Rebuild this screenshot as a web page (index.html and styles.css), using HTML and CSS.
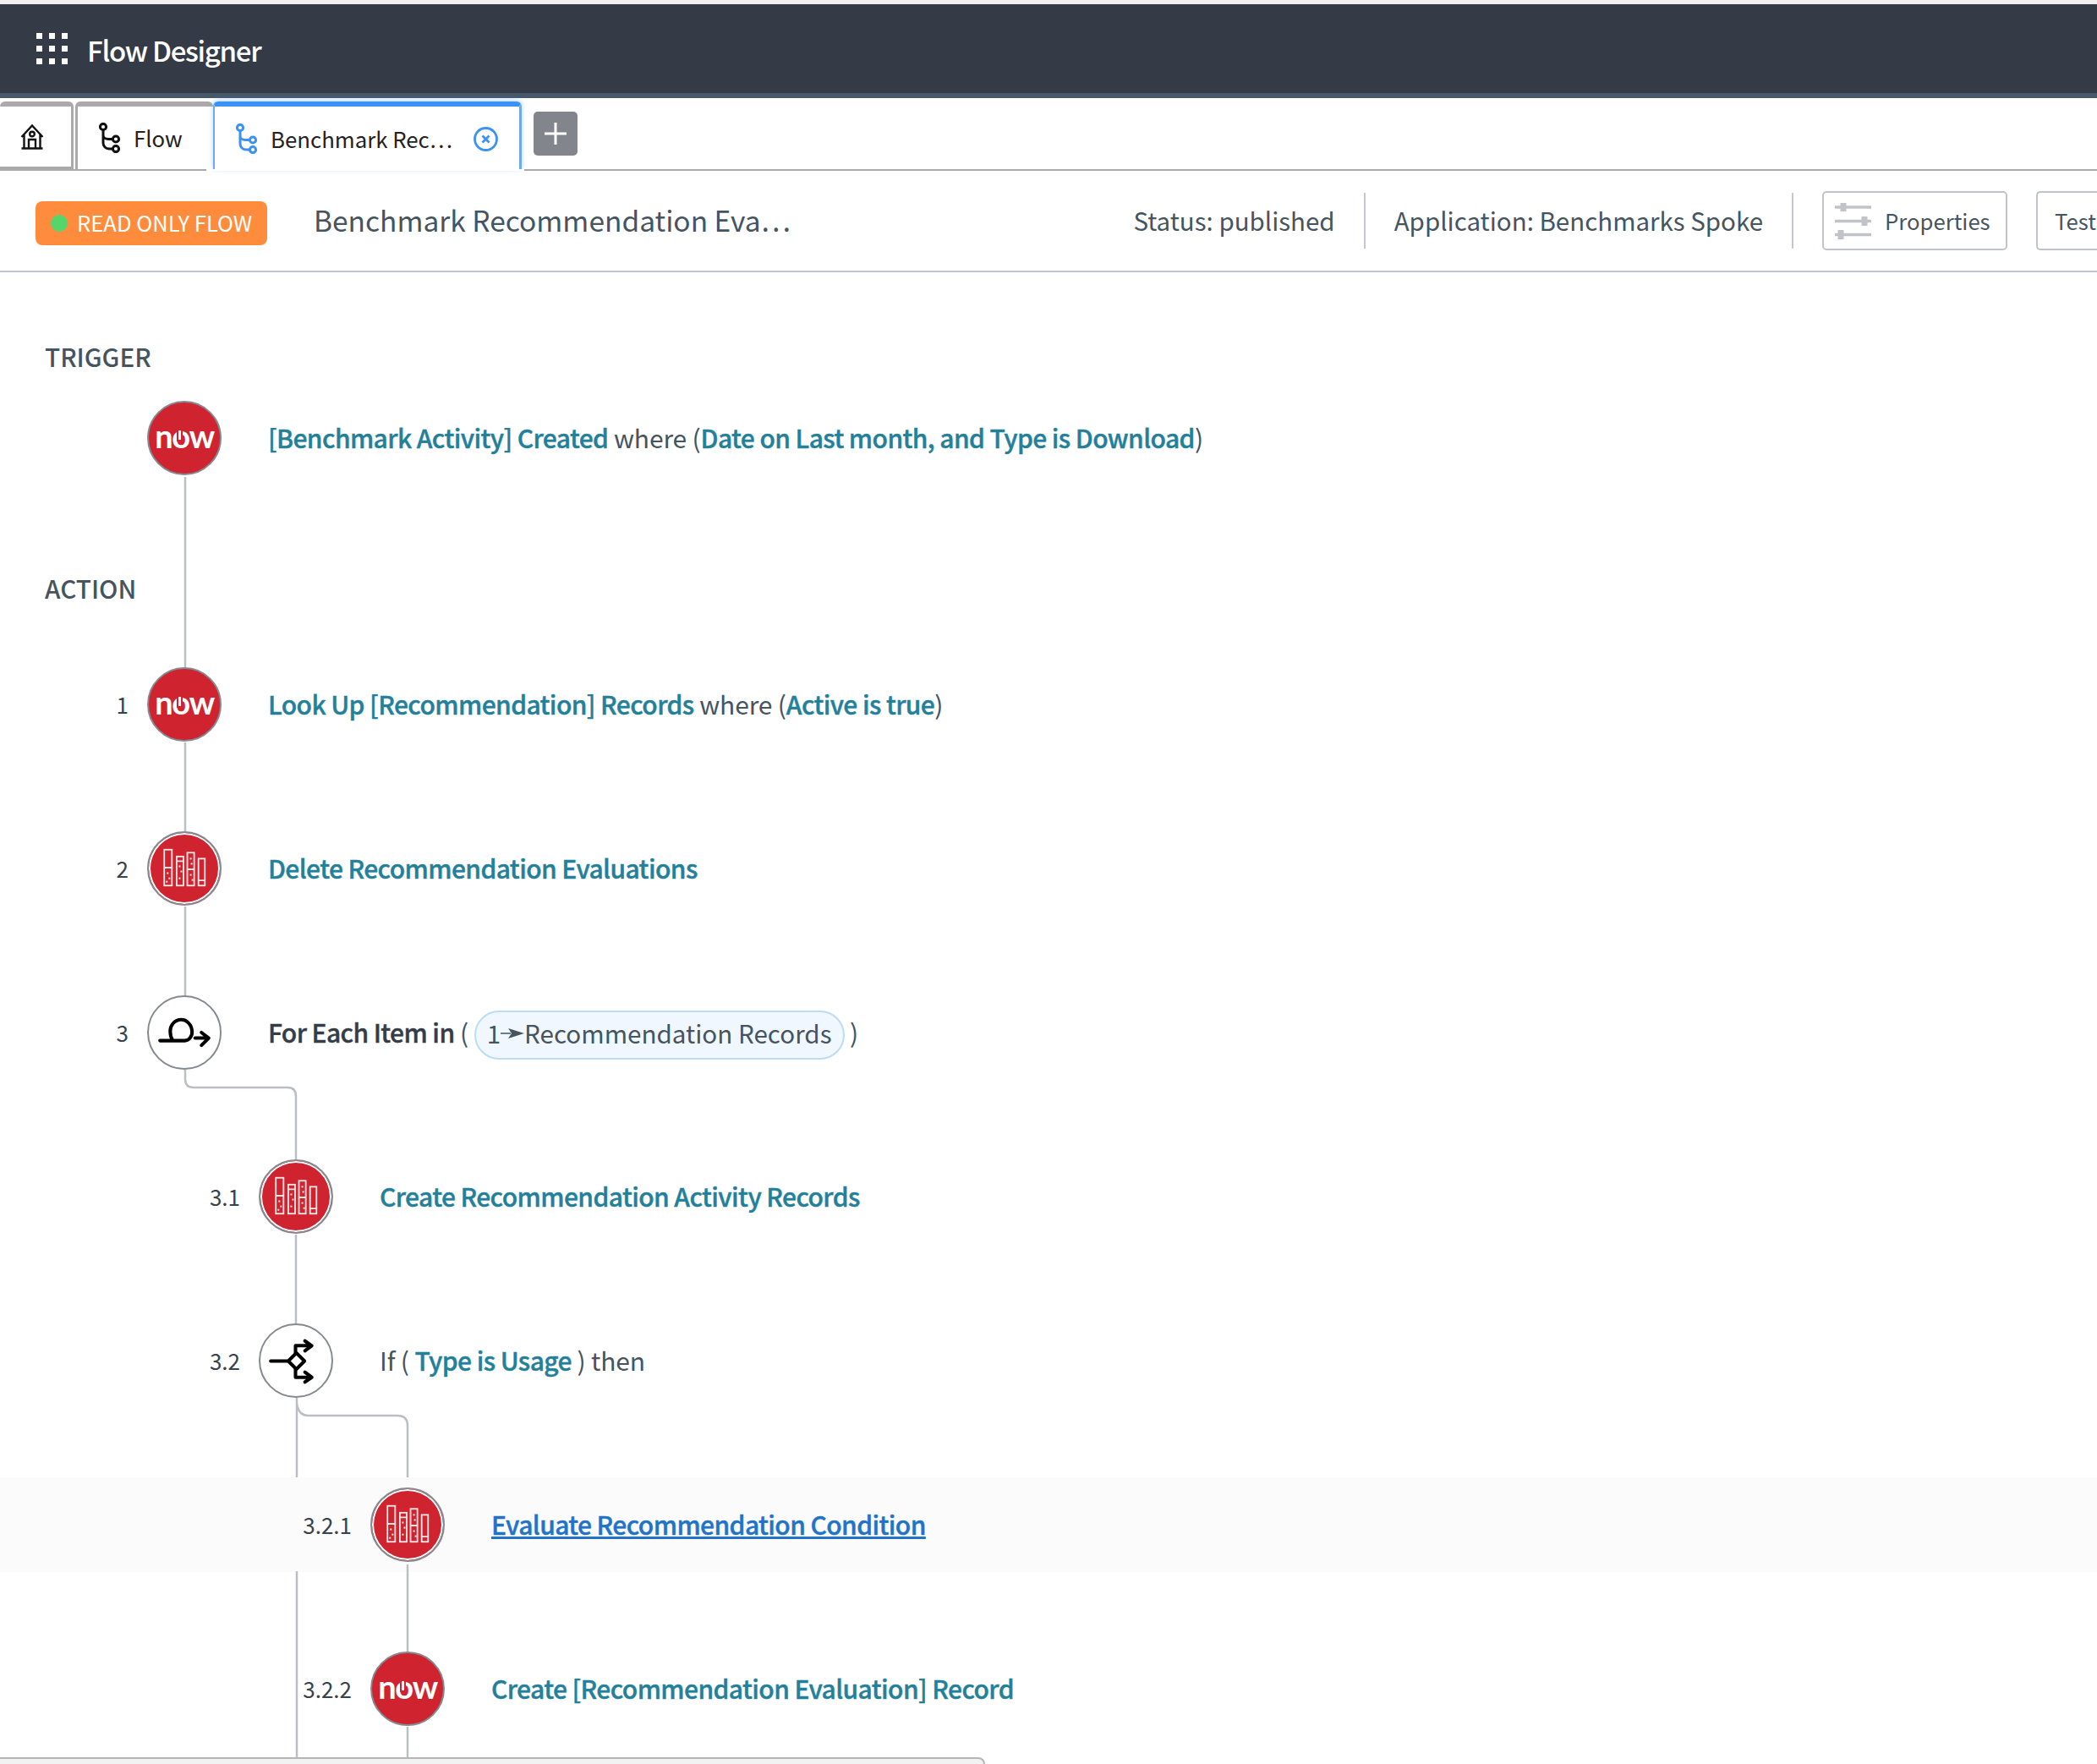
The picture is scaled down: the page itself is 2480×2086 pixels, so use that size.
FILE: index.html
```html
<!DOCTYPE html>
<html lang="en">

<head>
    <meta charset="UTF-8">
    <title>Flow Designer</title>
    <link rel="stylesheet" href="styles.css">
</head>

<body>
    <svg class="icon-defs" width="0" height="0">
        <defs>
            <symbol id="flow-icon" viewBox="0 0 26 36">
                <circle cx="5" cy="5" r="3.6" />
                <circle cx="20" cy="19.500" r="3.6" />
                <circle cx="20" cy="31" r="3.6" />
                <path d="M5 8.600V24C5 28 8 31 12 31H16.400M5 15C5 18 8 19.500 11 19.500H16.400" />
            </symbol>
            <symbol id="bars-icon" viewBox="0 0 87 87">
                <g class="bars">
                    <rect x="20" y="21.500" width="9" height="42" />
                    <rect x="34.500" y="29.500" width="8" height="34" />
                    <rect x="47" y="25" width="8" height="38.500" />
                    <rect x="60" y="32" width="7.500" height="31.500" />
                    <path d="M20 42.500H29M34.500 35H42.500M47 44.500H55M60 57.500H67.500" />
                </g>
                <g class="specks">
                    <rect x="23" y="48" width="2" height="2" />
                    <rect x="25" y="54" width="2" height="2" />
                    <rect x="22" y="58" width="2" height="2" />
                    <rect x="37" y="40" width="2" height="2" />
                    <rect x="39" y="46" width="2" height="2" />
                    <rect x="37" y="54" width="2" height="2" />
                    <rect x="50" y="31" width="2" height="2" />
                    <rect x="51" y="37" width="2" height="2" />
                    <rect x="50" y="50" width="2" height="2" />
                    <rect x="52" y="56" width="2" height="2" />
                </g>
            </symbol>
        </defs>
    </svg>

    <header class="top-bar">
        <svg class="grid-icon" viewBox="0 0 37 37">
            <rect x="0" y="0" width="7" height="7" />
            <rect x="15" y="0" width="7" height="7" />
            <rect x="30" y="0" width="7" height="7" />
            <rect x="0" y="15" width="7" height="7" />
            <rect x="15" y="15" width="7" height="7" />
            <rect x="30" y="15" width="7" height="7" />
            <rect x="0" y="30" width="7" height="7" />
            <rect x="15" y="30" width="7" height="7" />
            <rect x="30" y="30" width="7" height="7" />
        </svg>
        <span class="app-name">Flow Designer</span>
    </header>

    <nav class="tabs">
        <div class="tab tab-home">
            <svg class="home-icon" viewBox="0 0 28 30">
                <path d="M1.500 15L14 1.500L26.500 15M4.500 12V28.500H23.500V12M1.500 28.500H26.500M10 28.500V18H18V28.500" />
                <circle cx="14" cy="11.500" r="2.800" />
            </svg>
        </div>
        <div class="tab tab-flow">
            <svg class="flow-icon"><use href="#flow-icon" /></svg>
            <span class="tab-label">Flow</span>
        </div>
        <div class="tab tab-active">
            <svg class="flow-icon"><use href="#flow-icon" /></svg>
            <span class="tab-label tab-title">Benchmark Rec…</span>
            <svg class="close-icon" viewBox="0 0 29 29">
                <circle cx="14.500" cy="14.500" r="13" />
                <path d="M10.500 10.500L18.500 18.500M18.500 10.500L10.500 18.500" />
            </svg>
        </div>
        <div class="tab-add">
            <svg viewBox="0 0 28 28">
                <path d="M14 1V27M1 14H27" />
            </svg>
        </div>
    </nav>

    <section class="toolbar">
        <div class="badge"><i class="badge-dot"></i><span class="badge-text">READ ONLY FLOW</span></div>
        <div class="flow-title">Benchmark Recommendation Eva…</div>
        <div class="meta meta-status">Status: published</div>
        <div class="meta meta-app">Application: Benchmarks Spoke</div>
        <button class="btn btn-props">
            <svg class="sliders" viewBox="0 0 43 43">
                <path d="M0 5H43M0 21.500H43M0 37.500H43" />
                <path class="knob" d="M10 0V10M35 16V27M7 32V43" />
            </svg>
            Properties
        </button>
        <button class="btn btn-test">Test</button>
    </section>

    <main class="canvas">
        <svg class="connectors" width="2480" height="2086" viewBox="0 0 2480 2086">
            <path d="M219 564V790" />
            <path d="M219 878V984" />
            <path d="M219 1072V1178" />
            <path d="M219 1265V1276Q219 1286 229 1286H340Q350 1286 350 1296V1372" />
            <path d="M350 1460V1567" />
            <path d="M351 1653V1747M351 1858V2078" />
            <path d="M351 1660Q353 1674 365 1674H470Q482 1674 482 1686V1747" />
            <path d="M482 1850V1954M482 2042V2078" />
        </svg>

        <h2 class="section-label label-trigger">TRIGGER</h2>
        <div class="row row-trigger level-0">
            <span class="step"></span>
            <span class="node node-red">
                <span class="now">n<span class="now-o">o</span>w</span>
            </span>
            <p class="row-text"><b class="link">[Benchmark Activity] Created</b> where (<b class="link">Date on Last month, and Type is Download</b>)</p>
        </div>

        <h2 class="section-label label-action">ACTION</h2>
        <div class="row row-first level-0">
            <span class="step">1</span>
            <span class="node node-red">
                <span class="now">n<span class="now-o">o</span>w</span>
            </span>
            <p class="row-text"><b class="link">Look Up [Recommendation] Records</b> where (<b class="link">Active is true</b>)</p>
        </div>
        <div class="row level-0">
            <span class="step">2</span>
            <span class="node node-red node-ring"><svg class="node-svg"><use href="#bars-icon" /></svg></span>
            <p class="row-text"><b class="link">Delete Recommendation Evaluations</b></p>
        </div>
        <div class="row level-0">
            <span class="step">3</span>
            <span class="node">
                <svg class="node-svg line-icon" viewBox="0 0 87 87">
                    <path d="M15 53H44C49 53 53 48 52.500 42C52 34 46 28.500 40 28.500C32 28.500 27 35 27 42C27 47 28 50 30 53" />
                    <path d="M56 50H71M63.500 43.500L72 50L63.500 58.500" />
                </svg>
            </span>
            <p class="row-text"><b class="strong">For Each Item in</b> ( <span class="pill">1<svg class="pill-arrow" viewBox="0 0 28 12"><path d="M0 6H12" /><path class="head" d="M9 0L28 6L9 12L13 6Z" /></svg>Recommendation Records</span> )</p>
        </div>
        <div class="row level-1">
            <span class="step">3.1</span>
            <span class="node node-red node-ring"><svg class="node-svg"><use href="#bars-icon" /></svg></span>
            <p class="row-text"><b class="link">Create Recommendation Activity Records</b></p>
        </div>
        <div class="row level-1">
            <span class="step">3.2</span>
            <span class="node">
                <svg class="node-svg line-icon" viewBox="0 0 87 87">
                    <path d="M14 44H35M44 34.500L53.500 44L44 53.500L34.500 44Z" />
                    <path d="M43 35V26H62M54 20.500L62 26L54 32M43 53V63H62M54 57L62 63L54 68.500" />
                </svg>
            </span>
            <p class="row-text">If ( <b class="link">Type is Usage</b> ) then</p>
        </div>
        <div class="row row-hover level-2">
            <span class="step">3.2.1</span>
            <span class="node node-red node-ring"><svg class="node-svg"><use href="#bars-icon" /></svg></span>
            <p class="row-text"><b class="link-active">Evaluate Recommendation Condition</b></p>
        </div>
        <div class="row level-2">
            <span class="step">3.2.2</span>
            <span class="node node-red">
                <span class="now">n<span class="now-o">o</span>w</span>
            </span>
            <p class="row-text"><b class="link">Create [Recommendation Evaluation] Record</b></p>
        </div>

        <div class="bottom-panel"></div>
    </main>
</body>
</html>
```
FILE: styles.css
```css
* {
    margin: 0;
    padding: 0;
    box-sizing: border-box;
    font-family: 'Noto Sans CJK SC', 'Noto Sans', sans-serif;
}

html,
body {
    height: 2086px;
    overflow: hidden;
    background-color: white;
}

body {
    border-top: 5px solid #f0f0f0;
}

.icon-defs {
    position: absolute;
}

/* top bar */
.top-bar {
    display: flex;
    align-items: center;
    height: 111px;
    padding-left: 43px;
    background-color: #343b47;
    border-bottom: 6px solid #46586a;
}

.grid-icon {
    width: 37px;
    height: 37px;
    fill: white;
    margin-right: 23px;
}

.app-name {
    margin-top: 2px;
    color: white;
    font-size: 33px;
    font-weight: 500;
    letter-spacing: -1.300px;
}

/* tabs */
.tabs {
    display: flex;
    height: 82px;
    margin-top: 4px;
    border-bottom: 2px solid #aaa;
}

.tab {
    display: flex;
    align-items: center;
    height: 80px;
    background-color: white;
    border-top: 6px solid #aaa;
    border-radius: 6px 6px 0 0;
    font-size: 25.800px;
    color: #222;
}

.tab-label {
    padding-bottom: 1px;
}

.tab-home {
    justify-content: center;
    width: 87px;
    padding-right: 8px;
    border-right: 3px solid #aaa;
    border-bottom: 3px solid #aaa;
}

.home-icon {
    width: 28px;
    height: 30px;
    fill: none;
    stroke: #111;
    stroke-width: 2.400;
}

.tab-flow {
    width: 163px;
    margin-left: 2px;
    padding-left: 25px;
    border-left: 3px solid #aaa;
}

.flow-icon {
    flex: none;
    width: 26px;
    height: 36px;
    margin-right: 15px;
    fill: none;
    stroke: #111;
    stroke-width: 3;
}

.tab-active {
    position: relative;
    width: 365px;
    height: 82px;
    padding-left: 25px;
    border-top-color: #3c91f5;
    border-left: 2px solid #6fa9ef;
    border-right: 3px solid #6fa9ef;
    box-shadow: 0 -2px 6px rgba(60, 145, 245, 0.35);
}

.tab-active::after {
    content: "";
    position: absolute;
    left: -10px;
    right: -6px;
    bottom: 0;
    height: 2px;
    background-color: white;
}

.tab-active .flow-icon {
    stroke: #3c91f5;
}

.tab-title {
    flex: 1;
}

.close-icon {
    flex: none;
    width: 29px;
    height: 29px;
    margin-right: 25px;
    fill: none;
    stroke: #3c91f5;
    stroke-width: 2.800;
}

.tab-add {
    display: flex;
    align-items: center;
    justify-content: center;
    width: 52px;
    height: 52px;
    margin: 12px 0 0 14px;
    background-color: #82868c;
    border-radius: 5px;
}

.tab-add svg {
    width: 28px;
    height: 28px;
    fill: none;
    stroke: white;
    stroke-width: 3;
}

/* toolbar */
.toolbar {
    display: flex;
    align-items: center;
    height: 120px;
    padding-left: 42px;
    border-bottom: 2px solid #c0c4c8;
}

.badge {
    display: flex;
    align-items: center;
    width: 274px;
    height: 52px;
    margin-top: 6px;
    padding-left: 18px;
    background-color: #ff8c3c;
    border-radius: 8px;
    color: white;
    font-size: 25.600px;
    white-space: nowrap;
}

.badge-dot {
    width: 20px;
    height: 20px;
    margin-right: 11px;
    border-radius: 50%;
    background-color: #54d66a;
}

.badge-text {
    padding-bottom: 3px;
}

.flow-title {
    margin-left: 55px;
    margin-right: auto;
    padding-bottom: 3px;
    color: #46545f;
    font-size: 33.500px;
}

.meta {
    display: flex;
    align-items: center;
    height: 66px;
    padding: 0 34px 3px 0;
    margin-right: 34px;
    border-right: 2px solid #c4c7cb;
    color: #46545f;
    font-size: 29.500px;
}

.btn {
    display: flex;
    align-items: center;
    height: 70px;
    padding-bottom: 1px;
    background-color: white;
    border: 2px solid #c0c4c8;
    border-radius: 5px;
    color: #46545f;
    font-size: 25.700px;
}

.btn-props {
    width: 219px;
    padding-left: 13px;
}

.sliders {
    width: 43px;
    height: 43px;
    margin-right: 16px;
    margin-top: 1px;
    fill: none;
    stroke: #c0c4c8;
    stroke-width: 3.500;
}

.sliders .knob {
    stroke-width: 7;
}

.btn-test {
    width: 72px;
    margin-left: 34px;
    padding-left: 20px;
    border-right: none;
    border-radius: 5px 0 0 5px;
}

/* flow canvas */
.canvas {
    position: relative;
    height: 1764px;
}

.connectors {
    position: absolute;
    left: 0;
    top: -322px;
    z-index: 1;
    fill: none;
    stroke: #bbbfc3;
    stroke-width: 2.500;
    pointer-events: none;
}

.section-label {
    margin-left: 53px;
    color: #46545f;
    font-size: 29.700px;
    font-weight: 500;
    line-height: 40px;
}

.label-trigger {
    padding-top: 80px;
    box-sizing: content-box;
}

.label-action {
    margin-top: 102px;
}

.row {
    display: flex;
    align-items: center;
    height: 112px;
    margin-bottom: 82px;
    font-size: 30px;
    color: #46545f;
}

.row-trigger {
    margin-top: 20px;
}

.row-first {
    margin-top: 61px;
}

.row-hover {
    background-color: #fbfbfb;
}

.level-0 .step {
    width: 152px;
}

.level-1 .step {
    width: 284px;
}

.level-2 .step {
    width: 416px;
}

.step {
    flex: none;
    padding-bottom: 2px;
    text-align: right;
    color: #37424d;
    font-size: 26px;
}

.node {
    position: relative;
    z-index: 2;
    flex: none;
    display: flex;
    align-items: center;
    justify-content: center;
    width: 88px;
    height: 88px;
    margin-left: 22px;
    border-radius: 50%;
    background-color: white;
    border: 2px solid #858a90;
}

.node-red {
    background-color: #cf2330;
}

.node-ring {
    box-shadow: inset 0 0 0 2px white;
}

.node-svg {
    position: absolute;
    left: -2px;
    top: -2px;
    width: 88px;
    height: 88px;
}

.bars {
    fill: none;
    stroke: #fbe6e6;
    stroke-width: 1.800;
}

.specks {
    fill: #fbe6e6;
}

.line-icon {
    fill: none;
    stroke: black;
    stroke-width: 4;
    stroke-linecap: round;
    stroke-linejoin: round;
}

.now {
    color: white;
    font-family: 'Lato', sans-serif;
    font-size: 38px;
    font-weight: bold;
    letter-spacing: -1.500px;
    line-height: 1;
    margin-top: -6px;
}

.now-o {
    position: relative;
    font-family: inherit;
}

.now-o::after {
    content: "";
    position: absolute;
    left: 50%;
    top: 17px;
    width: 3px;
    height: 11px;
    margin-left: -2px;
    background-color: white;
    box-shadow: 0 0 0 2px #cf2330;
}

.row-text {
    margin-left: 55px;
    padding-bottom: 3px;
    white-space: nowrap;
    letter-spacing: -0.150px;
}

.row-text b {
    font-weight: 500;
    letter-spacing: -0.600px;
    -webkit-text-stroke: 0.4px;
}

.link {
    color: #23809a;
}

.link-active {
    color: #2173c9;
    text-decoration: underline;
}

.strong {
    color: #343d47;
}

.pill {
    display: inline-flex;
    align-items: center;
    height: 58px;
    margin: -12px 0;
    padding: 0 13px 5px;
    background-color: #f0f7ff;
    border: 2px solid #bcdcf7;
    border-radius: 29px;
    font-size: 29.600px;
    letter-spacing: 0;
    vertical-align: middle;
}

.pill-arrow {
    width: 28px;
    height: 12px;
    fill: none;
    stroke: #46545f;
    stroke-width: 1.500;
}

.pill-arrow .head {
    fill: #46545f;
    stroke: none;
}

.bottom-panel {
    position: absolute;
    left: 0;
    top: 1756px;
    z-index: 3;
    width: 1165px;
    height: 20px;
    background-color: #f2f2f2;
    border: 2px solid #b5b5b5;
    border-left: none;
    border-radius: 0 8px 0 0;
}
```
